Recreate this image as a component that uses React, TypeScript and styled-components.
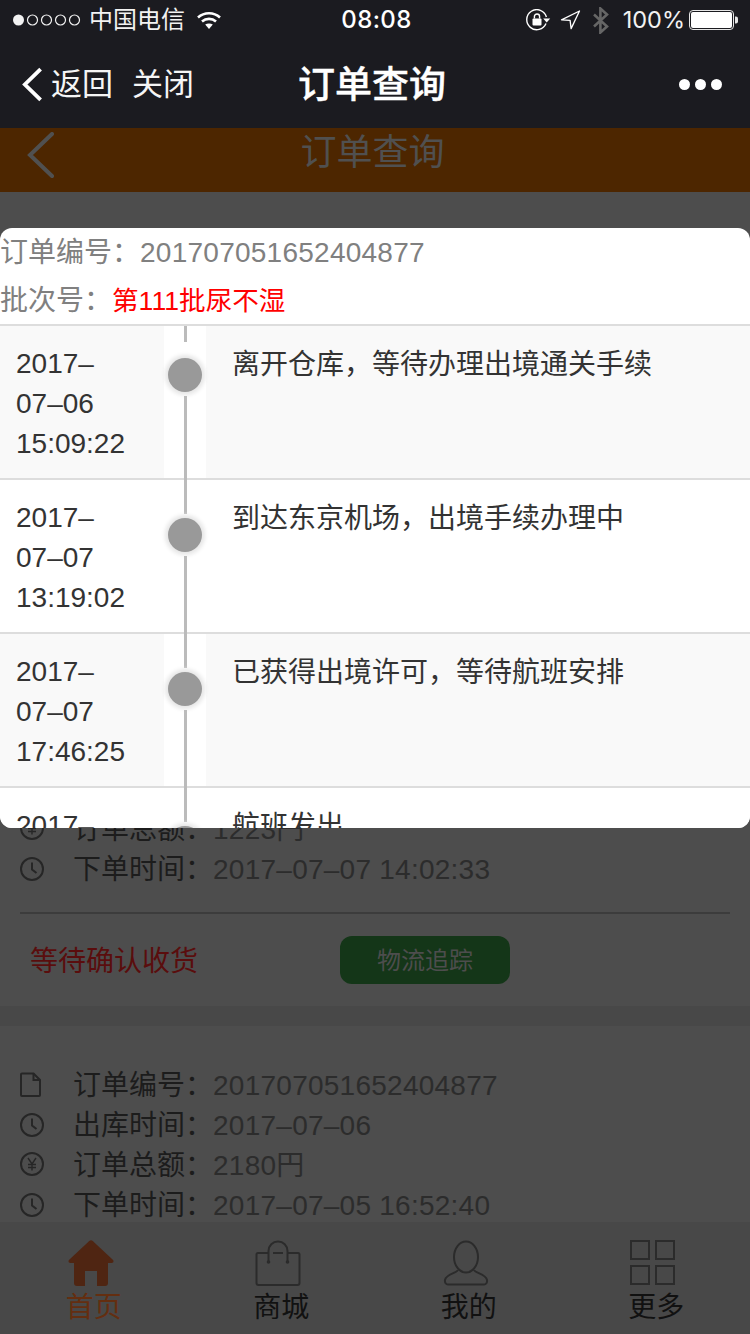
import React from 'react';
import styled, { createGlobalStyle } from 'styled-components';

const FONT = `"Liberation Sans", "Noto Sans CJK SC", sans-serif`;

const GlobalStyle = createGlobalStyle`
  html, body {
    margin: 0;
    padding: 0;
    background: #4d4d4d;
    font-family: ${FONT};
  }
`;

const Page = styled.div`
  position: relative;
  display: flex;
  flex-direction: column;
  width: 750px;
  height: 1334px;
  overflow: hidden;
  background: #4d4d4d;
`;

const StatusBar = styled.div`
  display: grid;
  grid-template-columns: 1fr auto 1fr;
  align-items: center;
  flex: none;
  height: 40px;
  padding: 0 12px 0 13px;
  background: #1b1b20;
  color: #fff;
`;

const StatusGroup = styled.div<{ $end?: boolean }>`
  display: flex;
  align-items: center;
  justify-content: ${props => (props.$end ? 'flex-end' : 'flex-start')};
`;

const Carrier = styled.span`
  margin: 0 11px 0 6px;
  font-size: 24px;
  line-height: 40px;
  color: #f2f2f2;
`;

const Clock = styled.span`
  margin-left: 2px;
  font-family: Inter, sans-serif;
  font-size: 24px;
  font-weight: 500;
  letter-spacing: 0.4px;
  line-height: 40px;
`;

const StatusIcon = styled.span<{ $gap: number }>`
  display: flex;
  margin-right: ${props => props.$gap}px;
`;

const Percent = styled.span`
  margin: 0 4px 0 14px;
  font-family: Inter, sans-serif;
  font-size: 23.5px;
  font-weight: 400;
  line-height: 40px;
  color: #f2f2f2;
`;

const NavBar = styled.div`
  display: grid;
  grid-template-columns: 1fr auto 1fr;
  align-items: center;
  flex: none;
  height: 88px;
  padding: 0 28px 0 22px;
  background: #1b1b20;
  color: #fff;
`;

const NavLeft = styled.div`
  display: flex;
  align-items: center;
`;

const NavLink = styled.span<{ $gap: number }>`
  margin-left: ${props => props.$gap}px;
  padding-top: 2px;
  font-size: 31px;
  line-height: 40px;
  color: #f5f5f5;
`;

const NavTitle = styled.div`
  padding-top: 3px;
  font-size: 37px;
  font-weight: 500;
  line-height: 48px;
  -webkit-text-stroke: 0.4px #fff;
`;

const MoreDots = styled.div`
  display: flex;
  justify-content: flex-end;
  gap: 5px;
`;

const MoreDot = styled.span`
  width: 11px;
  height: 11px;
  border-radius: 50%;
  background: #fff;
`;

const PageHeader = styled.div`
  display: grid;
  grid-template-columns: 1fr auto 1fr;
  flex: none;
  height: 64px;
  padding: 0 32px 0 27px;
  background: #4d2600;
`;

const HeaderTitle = styled.div`
  padding-top: 1px;
  font-size: 36px;
  line-height: 48px;
  color: #505050;
`;

const HeaderBack = styled.div`
  display: flex;
  align-items: flex-start;
  padding-top: 4px;
`;

const OrderList = styled.div`
  flex: 1;
  min-height: 0;
  overflow: hidden;
  padding-top: 498px;
`;

const OrderCard = styled.div`
  padding: 38px 20px 22px;
  margin-bottom: 20px;
  background: #4d4d4d;
  box-shadow: 0 20px 0 #484848;
`;

const InfoRow = styled.div`
  display: flex;
  align-items: center;
  height: 40px;
  font-size: 28px;
  line-height: 40px;
  white-space: nowrap;
`;

const InfoIcon = styled.span`
  display: flex;
  flex: none;
  width: 53px;
`;

const InfoLabel = styled.span`
  padding-top: 4px;
  color: #1c1c1c;
`;

const InfoValue = styled.span`
  padding-top: 4px;
  letter-spacing: 0.25px;
  color: #2c2c2c;
`;

const CardDivider = styled.div`
  height: 2px;
  margin-top: 24px;
  background: #3c3c3c;
`;

const CardFooter = styled.div`
  display: flex;
  align-items: center;
  margin-top: 22px;
  padding-left: 10px;
`;

const OrderStatus = styled.span`
  width: 310px;
  height: 48px;
  font-size: 28px;
  line-height: 52px;
  color: #5a0d0d;
`;

const TrackButton = styled.button`
  width: 170px;
  height: 48px;
  padding: 0 0 4px;
  border: 0;
  border-radius: 12px;
  background: #143618;
  font-family: ${FONT};
  font-size: 24px;
  color: #4d4d4d;
`;

const TabBar = styled.div`
  display: grid;
  grid-template-columns: repeat(4, 1fr);
  flex: none;
  height: 112px;
  background: #484848;
`;

const TabItem = styled.div<{ $active?: boolean }>`
  display: flex;
  flex-direction: column;
  align-items: center;
  padding-top: 18px;
  color: ${props => (props.$active ? '#642e10' : '#111')};

  svg {
    margin-right: 6px;
  }
`;

const TabLabel = styled.span`
  margin-top: 2px;
  font-size: 28px;
  line-height: 40px;
`;

const Dialog = styled.div`
  position: absolute;
  top: 228px;
  left: 0;
  right: 0;
  height: 600px;
  overflow: hidden;
  border-radius: 12px;
  background: #fff;
`;

const DialogHead = styled.div`
  border-bottom: 2px solid #ddd;
  font-size: 28px;
  line-height: 50px;
  color: #808080;
`;

const HeadLine = styled.div`
  height: 48px;
  white-space: nowrap;
`;

const HeadNumber = styled.span`
  letter-spacing: 0.25px;
`;

const Batch = styled.span`
  font-size: 26.6px;
  color: #f00;
`;

const TrackRow = styled.div<{ $striped: boolean }>`
  display: flex;
  box-sizing: border-box;
  flex: none;
  height: 154px;
  border-bottom: 2px solid #ddd;
  background: ${props => (props.$striped ? '#f9f9f9' : '#fff')};
  font-size: 28px;
  line-height: 40px;
  color: #333;
`;

const TrackTime = styled.div`
  box-sizing: border-box;
  flex: none;
  width: 164px;
  padding: 18px 28px 0 16px;
`;

const Rail = styled.div`
  display: flex;
  flex-direction: column;
  align-items: center;
  flex: none;
  width: 42px;
  background: #fff;
`;

const RailLine = styled.div<{ $height?: number }>`
  width: 3px;
  flex: ${props => (props.$height ? `0 0 ${props.$height}px` : '1')};
  margin-bottom: ${props => (props.$height ? '0' : '-2px')};
  background: #bbb;
`;

const RailDot = styled.div<{ $first: boolean }>`
  flex: none;
  width: 34px;
  height: 34px;
  margin: ${props => (props.$first ? '16px' : '4px')} 0 4px;
  border-radius: 50%;
  background: #999;
  box-shadow: 0 0 4px 3px #e6e6e6;
`;

const TrackText = styled.div`
  flex: 1;
  padding: 19px 0 0 26px;
`;

const Wifi = () => (
  <svg width="26" height="20" viewBox="0 0 26 20" fill="none" stroke="#fff" strokeWidth="2.6">
    <path d="M2 7.5c6.2-5.6 15.8-5.6 22 0" />
    <path d="M6 11.5c4-3.5 10-3.5 14 0" />
    <path d="M13 19l-3.8-4.4c2.2-1.6 5.4-1.6 7.6 0z" fill="#fff" stroke="none" />
  </svg>
);

const SignalDots = () => (
  <svg width="70" height="14" viewBox="0 0 70 14" fill="none" stroke="#f2f2f2" strokeWidth="1.2">
    <circle cx="5.5" cy="7" r="5.5" fill="#f2f2f2" stroke="none" />
    <circle cx="19.5" cy="7" r="5" />
    <circle cx="33.5" cy="7" r="5" />
    <circle cx="47.5" cy="7" r="5" />
    <circle cx="61.5" cy="7" r="5" />
  </svg>
);

const RotationLock = () => (
  <svg width="25" height="22" viewBox="0 0 25 22" fill="none">
    <path d="M20 14.5A10 10 0 1 1 20.4 8" stroke="#fff" strokeWidth="1.4" />
    <path d="M17.2 9.5h7l-3.5 4z" fill="#fff" />
    <rect x="6.5" y="9.5" width="9" height="7" rx="1" fill="#fff" />
    <path d="M8.4 9.5V7.6a2.6 2.6 0 0 1 5.2 0v1.9" stroke="#fff" strokeWidth="1.4" />
  </svg>
);

const LocationArrow = () => (
  <svg width="21" height="20" viewBox="0 0 21 20" fill="none" stroke="#fff" strokeWidth="1.3">
    <path d="M19.5 1L1.5 9.8l8.6.6 1 8.2z" strokeLinejoin="round" />
  </svg>
);

const Bluetooth = () => (
  <svg width="17" height="27" viewBox="0 0 17 27" fill="none" stroke="#666" strokeWidth="2.6">
    <path d="M2 7.5l13 12-6.6 6V1.5l6.6 6-13 12" />
  </svg>
);

const Battery = () => (
  <svg width="49" height="20" viewBox="0 0 49 20">
    <rect x="0.5" y="0.5" width="44" height="19" rx="3.5" fill="none" stroke="#e6e6e6" />
    <rect x="2" y="2" width="41" height="16" rx="2" fill="#fff" />
    <path d="M46 6.5h1a2 2 0 0 1 2 2v3a2 2 0 0 1-2 2h-1z" fill="#e6e6e6" />
  </svg>
);

const BackArrow = () => (
  <svg width="21" height="35" viewBox="0 0 22 36" fill="none" stroke="#fff" strokeWidth="4">
    <path d="M19.5 2L3 18l16.5 16" />
  </svg>
);

const HeaderArrow = () => (
  <svg width="28" height="46" viewBox="0 0 28 46" fill="none" stroke="#505050" strokeWidth="4" strokeLinecap="round">
    <path d="M25 2L3 23l22 21" />
  </svg>
);

const FileIcon = () => (
  <svg width="24" height="26" viewBox="0 0 24 26" fill="none" stroke="#262626" strokeWidth="2">
    <path d="M1 3.5a1 1 0 0 1 1-1h11.5L20 9v15a1 1 0 0 1-1 1H2a1 1 0 0 1-1-1z" />
    <path d="M13.5 2.5V9H20" />
  </svg>
);

const ClockIcon = () => (
  <svg width="24" height="26" viewBox="0 0 24 26" fill="none" stroke="#262626" strokeWidth="2">
    <circle cx="12" cy="14" r="11" />
    <path d="M12 7.5V14.5l4.5 3.5" />
  </svg>
);

const YenIcon = () => (
  <svg width="24" height="26" viewBox="0 0 24 26" fill="none" stroke="#262626" strokeWidth="2">
    <circle cx="12" cy="13" r="11" />
    <path d="M8 7l4 6 4-6M12 13v6.5M8 13.5h8M8 16.5h8" strokeWidth="1.4" />
  </svg>
);

const HomeIcon = () => (
  <svg width="46" height="46" viewBox="0 0 46 46" fill="#4f2512">
    <path d="M21 1.2a3 3 0 0 1 4 0l19.8 18.6c1.4 1.4.6 3.2-1.2 3.2H2.4c-1.8 0-2.6-1.8-1.2-3.2z" />
    <path d="M6 22h34v21a3 3 0 0 1-3 3h-8V31H17v15H9a3 3 0 0 1-3-3z" />
  </svg>
);

const BagIcon = () => (
  <svg width="46" height="46" viewBox="0 0 46 46" fill="none" stroke="#2b2b2b" strokeWidth="2">
    <path d="M13 13H3a1.5 1.5 0 0 0-1.500 1.500V43a2 2 0 0 0 2 2h39a2 2 0 0 0 2-2V14.500A1.500 1.500 0 0 0 43 13H33" />
    <path d="M13.500 22V11a9.500 9.500 0 0 1 19 0v11" />
    <path d="M18 13h10" />
    <circle cx="13.500" cy="22" r="1.800" fill="#2b2b2b" stroke="none" />
    <circle cx="32.500" cy="22" r="1.800" fill="#2b2b2b" stroke="none" />
  </svg>
);

const UserIcon = () => (
  <svg width="46" height="46" viewBox="0 0 46 46" fill="none" stroke="#2b2b2b" strokeWidth="2">
    <ellipse cx="23" cy="17" rx="12" ry="15.500" />
    <path d="M15 30c-1 3-12 4-13 10-.4 2.500 1 4.500 3 4.500h36c2 0 3.400-2 3-4.500-1-6-12-7-13-10" />
  </svg>
);

const GridIcon = () => (
  <svg width="46" height="46" viewBox="0 0 46 46" fill="none" stroke="#2b2b2b" strokeWidth="2">
    <rect x="1" y="1" width="18" height="18" />
    <rect x="26" y="1" width="18" height="18" />
    <rect x="1" y="26" width="18" height="18" />
    <rect x="26" y="26" width="18" height="18" />
  </svg>
);

type OrderLine = { icon: React.ReactNode; label: string; value: string };

const firstOrder: OrderLine[] = [
  { icon: <FileIcon />, label: '订单编号：', value: '201707051652404877' },
  { icon: <ClockIcon />, label: '出库时间：', value: '2017–07–06' },
  { icon: <YenIcon />, label: '订单总额：', value: '1223円' },
  { icon: <ClockIcon />, label: '下单时间：', value: '2017–07–07 14:02:33' },
];

const secondOrder: OrderLine[] = [
  { icon: <FileIcon />, label: '订单编号：', value: '201707051652404877' },
  { icon: <ClockIcon />, label: '出库时间：', value: '2017–07–06' },
  { icon: <YenIcon />, label: '订单总额：', value: '2180円' },
  { icon: <ClockIcon />, label: '下单时间：', value: '2017–07–05 16:52:40' },
];

const tracking = [
  { time: '2017–07–06 15:09:22', text: '离开仓库，等待办理出境通关手续' },
  { time: '2017–07–07 13:19:02', text: '到达东京机场，出境手续办理中' },
  { time: '2017–07–07 17:46:25', text: '已获得出境许可，等待航班安排' },
  { time: '2017–07–07 20:10:00', text: '航班发出' },
];

const tabs = [
  { label: '首页', icon: <HomeIcon />, active: true },
  { label: '商城', icon: <BagIcon /> },
  { label: '我的', icon: <UserIcon /> },
  { label: '更多', icon: <GridIcon /> },
];

function OrderInfo({ lines }: { lines: OrderLine[] }) {
  return (
    <>
      {lines.map((line, i) => (
        <InfoRow key={i}>
          <InfoIcon>{line.icon}</InfoIcon>
          <InfoLabel>{line.label}</InfoLabel>
          <InfoValue>{line.value}</InfoValue>
        </InfoRow>
      ))}
    </>
  );
}

export default function App() {
  return (
    <Page>
      <GlobalStyle />
      <StatusBar>
        <StatusGroup>
          <SignalDots />
          <Carrier>中国电信</Carrier>
          <Wifi />
        </StatusGroup>
        <Clock>08:08</Clock>
        <StatusGroup $end>
          <StatusIcon $gap={9}>
            <RotationLock />
          </StatusIcon>
          <StatusIcon $gap={11}>
            <LocationArrow />
          </StatusIcon>
          <Bluetooth />
          <Percent>100%</Percent>
          <Battery />
        </StatusGroup>
      </StatusBar>

      <NavBar>
        <NavLeft>
          <BackArrow />
          <NavLink $gap={8}>返回</NavLink>
          <NavLink $gap={19}>关闭</NavLink>
        </NavLeft>
        <NavTitle>订单查询</NavTitle>
        <MoreDots>
          <MoreDot />
          <MoreDot />
          <MoreDot />
        </MoreDots>
      </NavBar>

      <PageHeader>
        <HeaderBack>
          <HeaderArrow />
        </HeaderBack>
        <HeaderTitle>订单查询</HeaderTitle>
      </PageHeader>

      <OrderList>
        <OrderCard>
          <OrderInfo lines={firstOrder} />
          <CardDivider />
          <CardFooter>
            <OrderStatus>等待确认收货</OrderStatus>
            <TrackButton>物流追踪</TrackButton>
          </CardFooter>
        </OrderCard>
        <OrderCard>
          <OrderInfo lines={secondOrder} />
        </OrderCard>
      </OrderList>

      <TabBar>
        {tabs.map(tab => (
          <TabItem key={tab.label} $active={tab.active}>
            {tab.icon}
            <TabLabel>{tab.label}</TabLabel>
          </TabItem>
        ))}
      </TabBar>

      <Dialog>
        <DialogHead>
          <HeadLine>
            订单编号：<HeadNumber>201707051652404877</HeadNumber>
          </HeadLine>
          <HeadLine>
            批次号：<Batch>第111批尿不湿</Batch>
          </HeadLine>
        </DialogHead>
        {tracking.map((item, i) => (
          <TrackRow key={i} $striped={i % 2 === 0}>
            <TrackTime>{item.time}</TrackTime>
            <Rail>
              <RailLine $height={i === 0 ? 16 : 34} />
              <RailDot $first={i === 0} />
              <RailLine />
            </Rail>
            <TrackText>{item.text}</TrackText>
          </TrackRow>
        ))}
      </Dialog>
    </Page>
  );
}
